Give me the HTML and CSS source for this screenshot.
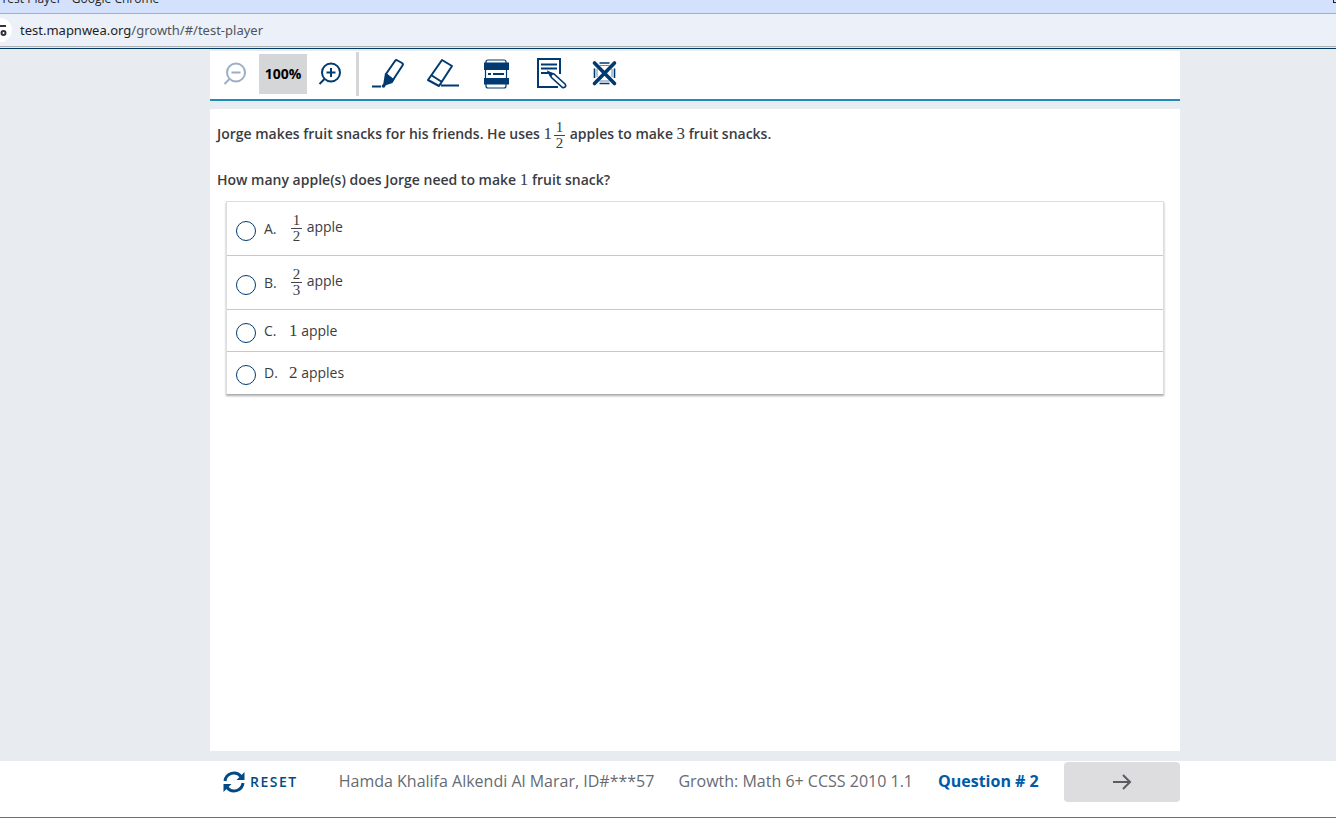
FILE: index.html
```html
<!DOCTYPE html>
<html lang="en">
<head>
<meta charset="utf-8">
<title>Test Player</title>
<link rel="stylesheet" href="styles.css">
</head>
<body>
<div class="window">
  <div class="titlebar"><span class="window-title">* Test Player - Google Chrome</span><span class="window-control"></span></div>
  <div class="address-bar">
    <span class="site-info"><svg width="24" height="24" viewBox="0 0 24 24" fill="none" stroke="#30343a" stroke-width="2"><path d="M10 8h8"/><circle cx="15.500" cy="15" r="2"/></svg></span>
    <span class="url">test.mapnwea.org<span class="path">/growth/#/test-player</span></span>
  </div>
  <header class="toolbar">
    <button class="tool zoom-out" aria-label="Zoom out" disabled>
      <svg width="24" height="24" viewBox="0 0 24 24" fill="none" stroke="#99b0c4" stroke-width="2"><circle cx="13" cy="10.500" r="9"/><path d="M8.500 10.500h9M6.500 17l-5 5"/></svg>
    </button>
    <span class="zoom-level">100%</span>
    <button class="tool zoom-in" aria-label="Zoom in">
      <svg width="24" height="24" viewBox="0 0 24 24" fill="none" stroke="#003a70" stroke-width="2"><circle cx="13" cy="10.500" r="9"/><path d="M8.500 10.500h9M13 6v9M6.500 17l-5 5" /></svg>
    </button>
    <span class="divider"></span>
    <div class="tools">
      <button class="tool" aria-label="Highlighter">
        <svg width="34" height="32" viewBox="0 0 34 32" fill="none" stroke="#003a70" stroke-width="2"><path d="M15 16L24 3q1-1.500 2.500-.5L31 5q1.500 1 .5 2.500L22 22z" stroke-linejoin="round"/><path d="M14 15l9.500 6.500-2 3.500-6 2-1.500 1-2-1.500.5-2z" fill="#003a70" stroke="none"/><path d="M1 28.500h9"/><circle cx="12.500" cy="28" r="1.800" fill="#003a70" stroke="none"/></svg>
      </button>
      <button class="tool" aria-label="Eraser">
        <svg width="34" height="32" viewBox="-1 0 34 32" fill="none" stroke="#003a70" stroke-width="2" stroke-linejoin="round"><path d="M16 2l10 6-13 20-11-6zM5 17l11 7M15 27.500h18"/></svg>
      </button>
      <button class="tool" aria-label="Line reader">
        <svg width="34" height="32" viewBox="0 0 34 32" fill="none" stroke="#003a70"><path d="M7 5V4q0-2 2-2h16q2 0 2 2v1M6.500 12v8M27.500 12v8M7 26v2q0 2 2 2h16q2 0 2-2v-2" stroke-width="1.200"/><path d="M5 4.500h25V12H5zM5 20h25v6.500H5z" fill="#003a70" stroke="none"/><path d="M9 16h3M14 16h11" stroke-width="2"/></svg>
      </button>
      <button class="tool" aria-label="Notepad">
        <svg width="34" height="32" viewBox="-2 1 34 32" fill="none" stroke="#003a70" stroke-width="2"><path d="M25 17V2H3v28h20M6 7.500h16M6 11.500h16M6 16h8"/><path d="M14 15.500l2.500 5 11 10q1 .5 2.500-.5t0-3L19 17z" fill="#fff" stroke-width="1.600"/><path d="M14 15.500l1.500 3 1.500-1.500z" fill="#003a70"/></svg>
      </button>
      <button class="tool" aria-label="Answer eliminator">
        <svg width="34" height="32" viewBox="-1 1 34 32" fill="none" stroke="#003a70"><path d="M11.500 6h10M11.500 26.500h10M6.500 11.500v9.500M26.500 11.500v9.500" stroke-width="1.600"/><path d="M11.500 8.500h10M11.500 24h10M9 12v8M24 12v8" stroke-width=".6"/><path d="M6.500 6l20 20.500M26.500 6l-20 20.500" stroke-width="3.600" stroke-linecap="round"/></svg>
      </button>
    </div>
  </header>
  <main class="question">
    <p class="stem">Jorge makes fruit snacks for his friends. He uses <span class="num">1</span><span class="fraction"><span>1</span><span>2</span></span> apples to make <span class="num">3</span> fruit snacks.</p>
    <p class="stem">How many apple(s) does Jorge need to make <span class="num">1</span> fruit snack?</p>
    <div class="answers" role="radiogroup" aria-label="Answers">
      <label class="answer tall"><input type="radio" name="answer"><span class="letter">A.</span><span class="choice"><span class="fraction"><span>1</span><span>2</span></span> apple</span></label>
      <label class="answer tall"><input type="radio" name="answer"><span class="letter">B.</span><span class="choice"><span class="fraction"><span>2</span><span>3</span></span> apple</span></label>
      <label class="answer"><input type="radio" name="answer"><span class="letter">C.</span><span class="choice"><span class="num">1</span> apple</span></label>
      <label class="answer"><input type="radio" name="answer"><span class="letter">D.</span><span class="choice"><span class="num">2</span> apples</span></label>
    </div>
  </main>
  <footer class="footer">
    <button class="reset">
      <svg width="22" height="22" viewBox="0 0 22 22" fill="none" stroke="#004b87" stroke-width="3"><path d="M2 10a9 9 0 0 1 16-4.500M20 12a9 9 0 0 1-16 4.500"/><path d="M21.500 1v8h-8zM.5 21v-8h8z" fill="#004b87" stroke="none"/></svg>
      <span>RESET</span>
    </button>
    <span class="student">Hamda Khalifa Alkendi Al Marar, ID#***57</span>
    <span class="test-name">Growth: Math 6+ CCSS 2010 1.1</span>
    <strong class="number">Question # 2</strong>
    <button class="next" aria-label="Next question"><svg width="20" height="18" viewBox="0 0 20 18" fill="none" stroke="#5c5c60" stroke-width="2"><path d="M1 9h17M11 2l7 7-7 7"/></svg></button>
  </footer>
</div>
</body>
</html>
```
FILE: styles.css
```css
* { box-sizing: border-box; }
body { margin: 0; font-family: "Open Sans", sans-serif; background: #e8ebf0; color: #3a3c42; }
button { border: 0; padding: 0; background: none; font: inherit; cursor: pointer; }
svg { display: block; }
.window { display: flex; flex-direction: column; min-height: 100vh; border-bottom: 1px solid #1f8ab5; }
.titlebar { display: flex; justify-content: space-between; align-items: flex-end; height: 14px; overflow: hidden; background: #d3e1fc; border-bottom: 1px solid #acaeb3; font-size: 12px; line-height: 20px; color: #1f1f1f; }
.window-title { margin-left: -9px; padding-bottom: 4px; }
.window-control { align-self: flex-start; width: 3px; height: 3px; border: 1px solid #1f1f1f; border-width: 0 0 1px 1px; }
.address-bar { display: flex; align-items: center; gap: 8px; height: 35px; padding-bottom: 2px; background: #ecf0f9; border-bottom: 1px solid #003a63; box-shadow: inset 0 -1px #e3eced, inset 0 -2px #acaeb0; font-family: "Noto Sans", sans-serif; font-size: 13px; line-height: 18px; color: #1f1f1f; }
.site-info { width: 24px; height: 24px; margin-left: -12px; border-radius: 50%; background: #fff; }
.path { color: #50545a; }
.toolbar { display: flex; align-items: center; height: 50px; margin: 2px 156px 8px 210px; padding-bottom: 3px; background: #fff; border-bottom: 2px solid #1f8db8; }
.zoom-out { margin: 0 12px 0 13px; }
.zoom-in { margin: 0 14px 0 11px; }
.zoom-level { display: grid; place-items: center; width: 48px; height: 40px; background: #d5d6d8; font-size: 14px; font-weight: 700; color: #000; }
.divider { width: 3px; height: 44px; background: #d5d6d8; }
.tools { display: flex; gap: 20px; padding-left: 12px; }
.question { flex: 1; margin: 0 156px 10px 210px; padding: 11px 16px 0 7px; background: #fff; font-size: 14px; line-height: 20px; }
.stem { margin: 0 0 19px; font-weight: 600; }
.stem + .stem { margin-bottom: 11px; }
.num, .fraction { font-family: "Liberation Serif", serif; font-size: 17px; font-weight: 400; }
.fraction { display: inline-flex; flex-direction: column; vertical-align: middle; width: 11px; margin: 0 1px 0 2px; font-size: 15px; line-height: 15px; text-align: center; }
.fraction span + span { border-top: 1px solid #444; }
.answers { margin-left: 9px; border: 1px solid #ddd; border-bottom: 0; box-shadow: 0 2px 2px #aaa; }
.answer { display: flex; align-items: center; height: 42px; padding-left: 9px; border-bottom: 1px solid #c8c8c8; }
.answer.tall { height: 54px; }
.answer:last-child { border-bottom: 0; }
.answer input { appearance: none; width: 20px; height: 20px; margin: 4px 8px 0 0; border: 1px solid #003a70; border-radius: 50%; background: #fff; }
.letter { width: 25px; }
.footer { display: flex; align-items: center; height: 56px; padding: 0 156px 14px 223px; background: #fff; font-size: 16px; color: #666b73; white-space: nowrap; }
.reset { display: flex; align-items: center; gap: 5px; margin-right: 41px; color: #004b87; font-size: 14px; font-weight: 600; letter-spacing: 1.5px; }
.student { margin-right: 24px; }
.test-name { margin-right: 25px; }
.student, .test-name, .number, .reset span { padding-bottom: 2px; }
.number { color: #005ba6; }
.next { display: grid; place-items: center; width: 116px; height: 40px; margin-left: auto; border-radius: 4px; background: #dddde0; }
```
